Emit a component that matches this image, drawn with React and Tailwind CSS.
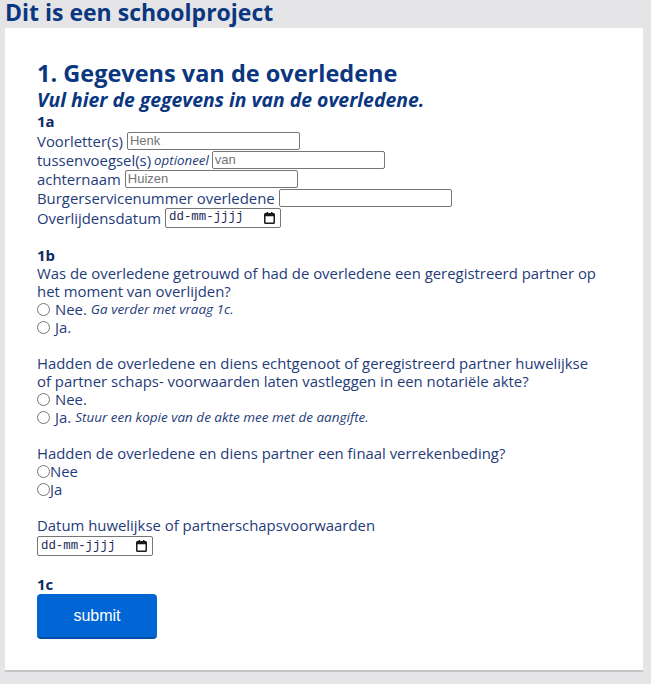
import React from "react";

const heading = "text-[#0b3680]";
const body = "text-[#1f3c7a]";

const TextField = ({ placeholder, className = "" }) => (
  <input
    type="text"
    placeholder={placeholder}
    className={`h-[18px] w-[173px] border border-[#767676] rounded-[2px] bg-white px-[2px] text-[13px] font-['Liberation_Sans',Arial,sans-serif] text-black placeholder:text-[#757575] outline-none ${className}`}
  />
);

const CalendarIcon = () => (
  <svg width="11" height="12" viewBox="0 0 11 12" className="shrink-0">
    <rect x="2.5" y="0" width="1.5" height="2.5" fill="#1a1a1a" />
    <rect x="7" y="0" width="1.5" height="2.5" fill="#1a1a1a" />
    <rect x="0.75" y="1.75" width="9.5" height="9.5" rx="0.8" fill="none" stroke="#1a1a1a" strokeWidth="1.5" />
    <rect x="0.75" y="1.75" width="9.5" height="2.5" fill="#1a1a1a" />
  </svg>
);

const DateField = ({ className = "" }) => (
  <div className={`flex h-[20px] w-[116px] items-center justify-between rounded-[2px] border border-[#767676] bg-white pl-[3px] pr-[5px] ${className}`}>
    <span className="font-['Liberation_Mono',monospace] text-[12.4px] leading-none text-[#1b2a55]">
      dd-mm-jjjj
    </span>
    <CalendarIcon />
  </div>
);

const Radio = ({ name, spaced = true }) => (
  <input
    type="radio"
    name={name}
    className={`appearance-none m-0 h-[13px] w-[13px] shrink-0 rounded-full border border-[#767676] bg-white ${spaced ? "mr-[5px]" : ""}`}
  />
);

const Line = ({ children, className = "" }) => (
  <div className={`flex h-[18px] items-center ${className}`}>{children}</div>
);

const Note = ({ children }) => (
  <i className="ml-[4px] text-[13.5px]">{children}</i>
);

export default function App() {
  return (
    <div className="min-h-[684px] bg-[#e5e5e7] font-['Open_Sans',sans-serif] pb-[11px]">
      <h1 className={`px-[5px] h-[28px] text-[23px] font-bold leading-[24px] ${heading}`}>
        Dit is een schoolproject
      </h1>
      <div className="ml-[5px] w-[638px] bg-white border-b-[2px] border-[#c6c6ca] px-8 pt-[30px] pb-[31px]">
        <form className={`text-[14.9px] leading-[18px] ${body}`} onSubmit={(e) => e.preventDefault()}>
          <h2 className={`text-[23.5px] font-bold leading-[30px] ${heading}`}>
            1. Gegevens van de overledene
          </h2>
          <h3 className={`text-[19.4px] font-bold italic leading-[24px] ${heading}`}>
            Vul hier de gegevens in van de overledene.
          </h3>
          <p className="font-bold text-[#0e2a63] h-[19px]">1a</p>

          <div className="flex h-[19px] items-center gap-[4px]">
            <span>Voorletter(s)</span>
            <TextField placeholder="Henk" />
          </div>
          <div className="flex h-[19px] items-center">
            <span>tussenvoegsel(s)</span>
            <i className="ml-[3px] text-[13.3px]">optioneel</i>
            <TextField placeholder="van" className="ml-[3px]" />
          </div>
          <div className="flex h-[19px] items-center gap-[4px]">
            <span>achternaam</span>
            <TextField placeholder="Huizen" />
          </div>
          <div className="flex h-[19px] items-center gap-[4px]">
            <span>Burgerservicenummer overledene</span>
            <TextField />
          </div>
          <div className="flex h-[21px] items-center gap-[4px]">
            <span>Overlijdensdatum</span>
            <DateField />
          </div>

          <p className="mt-[18px] font-bold text-[#0e2a63]">1b</p>
          <p>
            Was de overledene getrouwd of had de overledene een geregistreerd
            partner op
            <br />
            het moment van overlijden?
          </p>
          <Line>
            <Radio name="getrouwd" />
            <span>Nee.</span>
            <Note>Ga verder met vraag 1c.</Note>
          </Line>
          <Line>
            <Radio name="getrouwd" />
            <span>Ja.</span>
          </Line>

          <p className="mt-[18px]">
            Hadden de overledene en diens echtgenoot of geregistreerd partner
            huwelijkse
            <br />
            of partner schaps- voorwaarden laten vastleggen in een notariële
            akte?
          </p>
          <Line>
            <Radio name="akte" />
            <span>Nee.</span>
          </Line>
          <Line>
            <Radio name="akte" />
            <span>Ja.</span>
            <Note>Stuur een kopie van de akte mee met de aangifte.</Note>
          </Line>

          <p className="mt-[18px]">
            Hadden de overledene en diens partner een finaal verrekenbeding?
          </p>
          <Line>
            <Radio name="finaal" spaced={false} />
            <span>Nee</span>
          </Line>
          <Line>
            <Radio name="finaal" spaced={false} />
            <span>Ja</span>
          </Line>

          <p className="mt-[18px]">Datum huwelijkse of partnerschapsvoorwaarden</p>
          <DateField className="mt-[2px]" />

          <p className="mt-[19px] font-bold text-[#0e2a63]">1c</p>
          <button
            type="submit"
            className="mt-px h-[45px] w-[120px] rounded-[4px] border-b-[2px] border-[#0050a8] bg-[#0066d6] font-['Liberation_Sans',Arial,sans-serif] text-[16px] text-white"
          >
            submit
          </button>
        </form>
      </div>
    </div>
  );
}
